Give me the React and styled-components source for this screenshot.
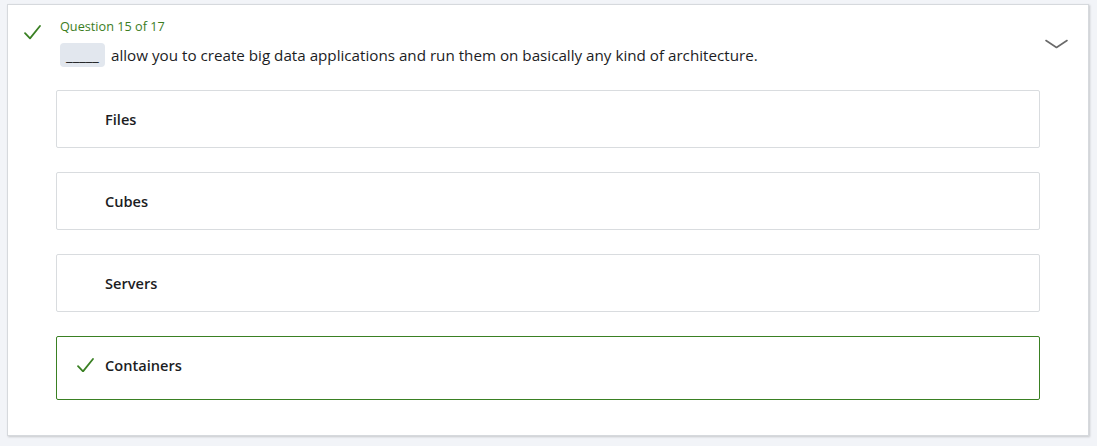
import React from "react";
import styled, { createGlobalStyle } from "styled-components";

const Global = createGlobalStyle`
  html, body { margin: 0; padding: 0; background: #f2f4f8; }
  body { font-family: "Open Sans", "Noto Sans", sans-serif; color: #1c1d1f; }
  #root { padding: 4px 8px 10px 7px; }
`;

const Card = styled.section`
  display: grid;
  grid-template-columns: 48px 1fr 48px;
  background: #fff;
  border: 1px solid #d6d9dd;
  box-shadow: 1px 1px 2px rgba(0, 0, 0, 0.18);
  padding: 12px 0 35px 0;
`;

const Gutter = styled.div`
  display: flex;
  justify-content: center;
  padding-top: ${(p) => p.$top || 0}px;
`;

const Main = styled.div`
  display: flex;
  flex-direction: column;
  min-width: 0;
`;

const Label = styled.div`
  font-size: 12.7px;
  line-height: 18px;
  color: #3b7d1e;
  padding-left: 4px;
`;

const QuestionText = styled.div`
  display: flex;
  align-items: center;
  gap: 6px;
  font-size: 15.2px;
  line-height: 24px;
  padding-left: 4px;
  margin-top: 8px;
`;

const Blank = styled.span`
  display: inline-flex;
  align-items: center;
  justify-content: center;
  width: 45px;
  height: 24px;
  background: #e2e7ee;
  border-radius: 4px;
  font-size: 15px;
  color: #1c1d1f;
`;

const Options = styled.div`
  display: flex;
  flex-direction: column;
  gap: 24px;
  margin-top: 23px;
`;

const Option = styled.div`
  display: flex;
  align-items: center;
  height: ${(p) => (p.$correct ? 64 : 58)}px;
  box-sizing: border-box;
  border: 1px solid ${(p) => (p.$correct ? "#3a8023" : "#d9dcdf")};
  border-radius: 2px;
  padding: 0 0 ${(p) => (p.$correct ? 6 : 0)}px 20px;
  font-size: 14.6px;
  font-weight: 600;
  color: #1c1d1f;
`;

const OptIcon = styled.span`
  display: inline-flex;
  width: 28px;
  justify-content: flex-start;
`;

const Chevron = styled.div`
  padding: 15px 0 0 5px;
`;

const Check = ({ size = 17 }) => (
  <svg width={size} height={size * 0.88} viewBox="0 0 17 15" fill="none">
    <path d="M1 8.2 L6 13.4 L16 1" stroke="#3a8023" strokeWidth="1.8" strokeLinecap="round" strokeLinejoin="round" />
  </svg>
);

const options = [
  { text: "Files" },
  { text: "Cubes" },
  { text: "Servers" },
  { text: "Containers", correct: true },
];

export default function App() {
  return (
    <>
      <Global />
      <Card>
        <Gutter $top={8}>
          <Check />
        </Gutter>
        <Main>
          <Label>Question 15 of 17</Label>
          <QuestionText>
            <Blank>_____</Blank>
            allow you to create big data applications and run them on basically any kind of architecture.
          </QuestionText>
          <Options>
            {options.map((o) => (
              <Option key={o.text} $correct={o.correct}>
                <OptIcon>{o.correct && <Check size={17} />}</OptIcon>
                {o.text}
              </Option>
            ))}
          </Options>
        </Main>
        <Chevron>
          <svg width="23" height="10" viewBox="0 0 23 10" fill="none">
            <path d="M1 1.5 L11.5 8.5 L22 1.5" stroke="#6a6a6a" strokeWidth="1.6" strokeLinecap="round" strokeLinejoin="round" />
          </svg>
        </Chevron>
      </Card>
    </>
  );
}
